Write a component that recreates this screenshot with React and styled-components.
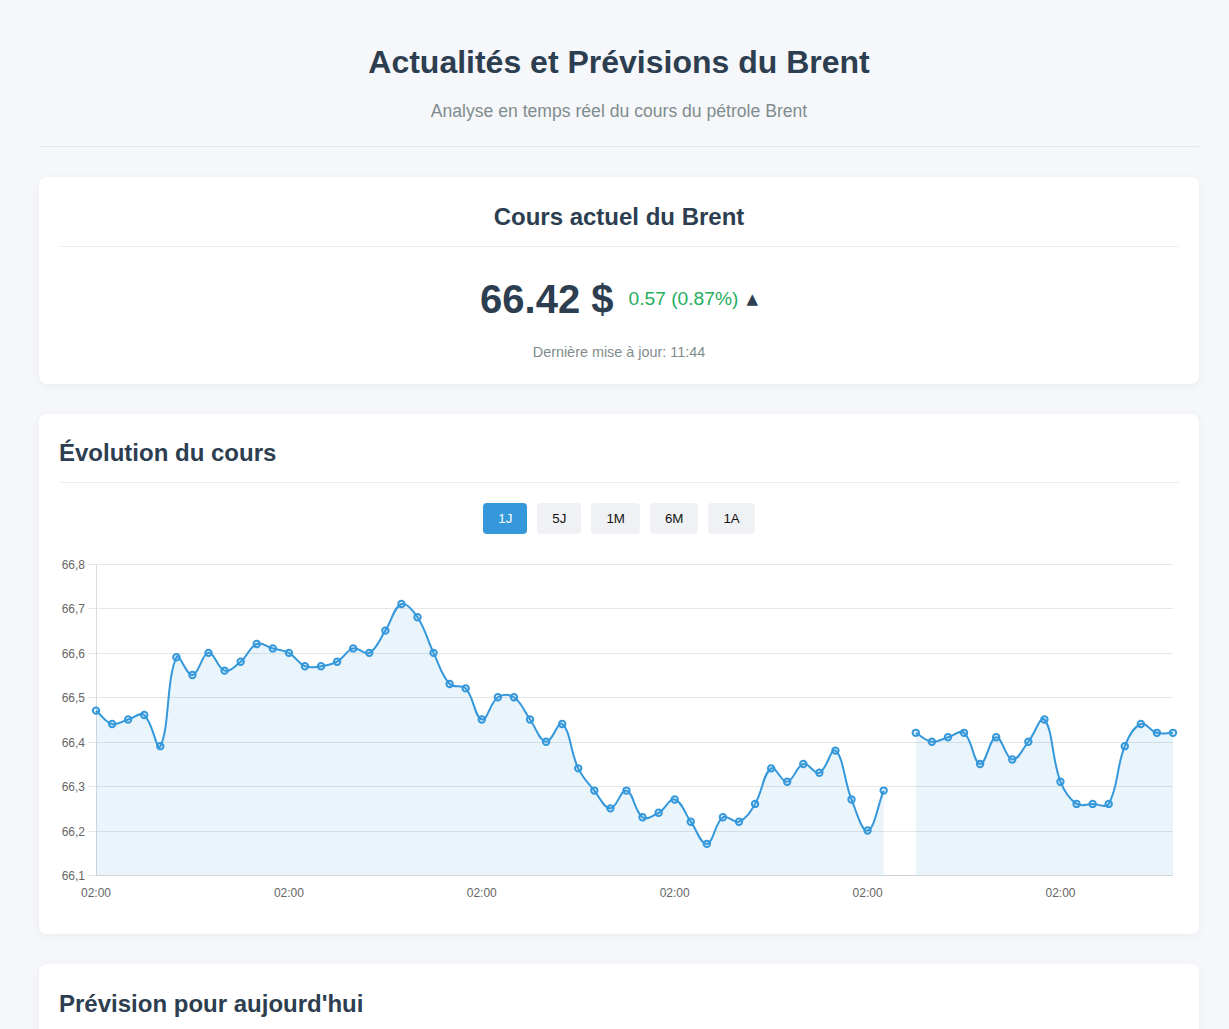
import React from "react";
import styled, { createGlobalStyle } from "styled-components";

const GlobalStyle = createGlobalStyle`
  html, body { margin: 0; padding: 0; }
  body {
    background: #f5f7fa;
    font-family: "Liberation Sans", Arial, Helvetica, sans-serif;
    color: #2c3e50;
  }
`;

const Page = styled.div`
  padding: 0 30px 40px 39px;
`;

const Header = styled.header`
  padding: 43px 0 24px;
  border-bottom: 1px solid #e3e6ea;
  margin-bottom: 30px;
  text-align: center;
`;

const Title = styled.h1`
  margin: 0;
  font-size: 32px;
  line-height: 38px;
  font-weight: 700;
  color: #2c3e50;
`;

const Subtitle = styled.p`
  margin: 19px 0 0;
  font-size: 17.6px;
  line-height: 22px;
  color: #7f8c8d;
`;

const Card = styled.section`
  background: #ffffff;
  border-radius: 8px;
  box-shadow: 0 2px 10px rgba(0, 0, 0, 0.05);
  padding: ${(p) => p.$top || 25}px 20px 20px;
  margin-bottom: 30px;
`;

const CardTitle = styled.h2`
  margin: 0;
  font-size: 24px;
  line-height: 29px;
  font-weight: 700;
  color: #2c3e50;
  padding-bottom: 15px;
  border-bottom: 1px solid #eeeeee;
  text-align: ${(p) => (p.$center ? "center" : "left")};
`;

const PriceBody = styled.div`
  text-align: center;
  padding-bottom: 3px;
`;

const PriceRow = styled.div`
  margin-top: 28px;
  display: flex;
  justify-content: center;
  align-items: center;
  height: 48px;
`;

const Price = styled.span`
  font-size: 40px;
  line-height: 48px;
  font-weight: 700;
  color: #2c3e50;
`;

const Change = styled.span`
  margin-left: 15px;
  font-size: 19.2px;
  color: ${(p) => (p.$up ? "#27ae60" : "#e74c3c")};
`;

const Arrow = styled.span`
  margin-left: 8px;
  font-size: 15px;
  color: #2c3e50;
  font-family: "DejaVu Sans", sans-serif;
`;

const Updated = styled.div`
  margin-top: 20px;
  font-size: 14.4px;
  line-height: 18px;
  color: #7f8c8d;
`;

const RangeBar = styled.div`
  display: flex;
  justify-content: center;
  gap: 10px;
  margin-top: 20px;
`;

const RangeButton = styled.button`
  border: none;
  border-radius: 4px;
  padding: 8px 15px;
  font-family: "Liberation Sans", Arial, sans-serif;
  font-size: 13.33px;
  line-height: 15px;
  cursor: pointer;
  background: ${(p) => (p.$active ? "#3498db" : "#f0f1f4")};
  color: ${(p) => (p.$active ? "#ffffff" : "#111111")};
`;

const ChartWrap = styled.div`
  margin-top: 20px;
  height: 360px;
`;

const ChartSvg = styled.svg`
  display: block;
  width: 100%;
  height: 360px;
  font-family: "Liberation Sans", Arial, sans-serif;
`;

const data = [
  66.47, 66.44, 66.45, 66.46, 66.39, 66.59, 66.55, 66.6, 66.56, 66.58,
  66.62, 66.61, 66.6, 66.57, 66.57, 66.58, 66.61, 66.6, 66.65, 66.71,
  66.68, 66.6, 66.53, 66.52, 66.45, 66.5, 66.5, 66.45, 66.4, 66.44,
  66.34, 66.29, 66.25, 66.29, 66.23, 66.24, 66.27, 66.22, 66.17, 66.23,
  66.22, 66.26, 66.34, 66.31, 66.35, 66.33, 66.38, 66.27, 66.2, 66.29,
  null,
  66.42, 66.4, 66.41, 66.42, 66.35, 66.41, 66.36, 66.4, 66.45, 66.31,
  66.26, 66.26, 66.26, 66.39, 66.44, 66.42, 66.42,
];

const W = 1120;
const AREA = { left: 37, right: 1114, top: 10, bottom: 321 };
const MIN = 66.1;
const MAX = 66.8;
const step = (AREA.right - AREA.left) / (data.length - 1);
const xOf = (i) => AREA.left + i * step;
const yOf = (v) =>
  AREA.bottom - ((v - MIN) / (MAX - MIN)) * (AREA.bottom - AREA.top);

function splitSegments() {
  const segs = [];
  let cur = [];
  data.forEach((v, i) => {
    if (v === null) {
      if (cur.length) segs.push(cur);
      cur = [];
    } else {
      cur.push({ x: xOf(i), y: yOf(v) });
    }
  });
  if (cur.length) segs.push(cur);
  return segs;
}

const clampY = (y) => Math.max(AREA.top, Math.min(AREA.bottom, y));

function controlPoints(pts, t = 0.4) {
  return pts.map((cur, i) => {
    const prev = pts[i - 1] || cur;
    const next = pts[i + 1] || cur;
    const d01 = Math.hypot(cur.x - prev.x, cur.y - prev.y);
    const d12 = Math.hypot(next.x - cur.x, next.y - cur.y);
    let s01 = d01 / (d01 + d12);
    let s12 = d12 / (d01 + d12);
    if (isNaN(s01)) s01 = 0;
    if (isNaN(s12)) s12 = 0;
    const fa = t * s01;
    const fb = t * s12;
    return {
      c1: { x: cur.x - fa * (next.x - prev.x), y: clampY(cur.y - fa * (next.y - prev.y)) },
      c2: { x: cur.x + fb * (next.x - prev.x), y: clampY(cur.y + fb * (next.y - prev.y)) },
    };
  });
}

function linePath(pts) {
  const cps = controlPoints(pts);
  let d = `M${pts[0].x.toFixed(2)},${pts[0].y.toFixed(2)}`;
  for (let i = 1; i < pts.length; i++) {
    const a = cps[i - 1].c2;
    const b = cps[i].c1;
    const p = pts[i];
    d += ` C${a.x.toFixed(2)},${a.y.toFixed(2)} ${b.x.toFixed(2)},${b.y.toFixed(2)} ${p.x.toFixed(2)},${p.y.toFixed(2)}`;
  }
  return d;
}

const yTicks = [66.8, 66.7, 66.6, 66.5, 66.4, 66.3, 66.2, 66.1];
const xTickIdx = [0, 12, 24, 36, 48, 60];

function PriceChart() {
  const segs = splitSegments();
  return (
    <ChartSvg viewBox={`0 0 ${W} 360`} preserveAspectRatio="none">
      {yTicks.map((v) => {
        const y = Math.round(yOf(v)) + 0.5;
        return (
          <g key={v}>
            <line x1={29} x2={AREA.right} y1={y} y2={y} stroke="#e6e6e6" strokeWidth="1" />
            <text x={26} y={y} textAnchor="end" dominantBaseline="central" fontSize="12" fill="#666">
              {v.toFixed(1).replace(".", ",")}
            </text>
          </g>
        );
      })}
      <line x1={AREA.left + 0.5} x2={AREA.left + 0.5} y1={AREA.top} y2={AREA.bottom + 0.5} stroke="#dcdcdc" strokeWidth="1" />
      {segs.map((pts, k) => {
        const d = linePath(pts);
        const last = pts[pts.length - 1];
        const fill = `${d} L${last.x.toFixed(2)},${AREA.bottom} L${pts[0].x.toFixed(2)},${AREA.bottom} Z`;
        return <path key={`f${k}`} d={fill} fill="rgba(52,152,219,0.1)" />;
      })}
      <line x1={AREA.left} x2={AREA.right} y1={AREA.bottom + 0.5} y2={AREA.bottom + 0.5} stroke="#cfd3d6" strokeWidth="1" />
      {segs.map((pts, k) => (
        <path key={`l${k}`} d={linePath(pts)} fill="none" stroke="#3498db" strokeWidth="2" />
      ))}
      {segs.flat().map((p, i) => (
        <circle key={i} cx={p.x} cy={p.y} r="3.2" fill="rgba(52,152,219,0.1)" stroke="#3498db" strokeWidth="2" />
      ))}
      {xTickIdx.map((i) => (
        <text key={i} x={xOf(i)} y={339} textAnchor="middle" dominantBaseline="central" fontSize="12" fill="#666">
          02:00
        </text>
      ))}
    </ChartSvg>
  );
}

const ranges = ["1J", "5J", "1M", "6M", "1A"];

const ForecastText = styled.p`
  margin: 20px 0 0;
  font-size: 16px;
  line-height: 1.6;
  color: #2c3e50;
`;

export default function App() {
  const [range, setRange] = React.useState("1J");
  return (
    <>
      <GlobalStyle />
      <Page>
        <Header>
          <Title>Actualités et Prévisions du Brent</Title>
          <Subtitle>Analyse en temps réel du cours du pétrole Brent</Subtitle>
        </Header>

        <Card>
          <CardTitle $center>Cours actuel du Brent</CardTitle>
          <PriceBody>
            <PriceRow>
              <Price>66.42 $</Price>
              <Change $up>0.57 (0.87%)</Change>
              <Arrow>▲</Arrow>
            </PriceRow>
            <Updated>Dernière mise à jour: 11:44</Updated>
          </PriceBody>
        </Card>

        <Card $top={24}>
          <CardTitle>Évolution du cours</CardTitle>
          <RangeBar>
            {ranges.map((r) => (
              <RangeButton key={r} $active={r === range} onClick={() => setRange(r)}>
                {r}
              </RangeButton>
            ))}
          </RangeBar>
          <ChartWrap>
            <PriceChart />
          </ChartWrap>
        </Card>

        <Card>
          <CardTitle>Prévision pour aujourd'hui</CardTitle>
          <ForecastText>&nbsp;</ForecastText>
        </Card>
      </Page>
    </>
  );
}
